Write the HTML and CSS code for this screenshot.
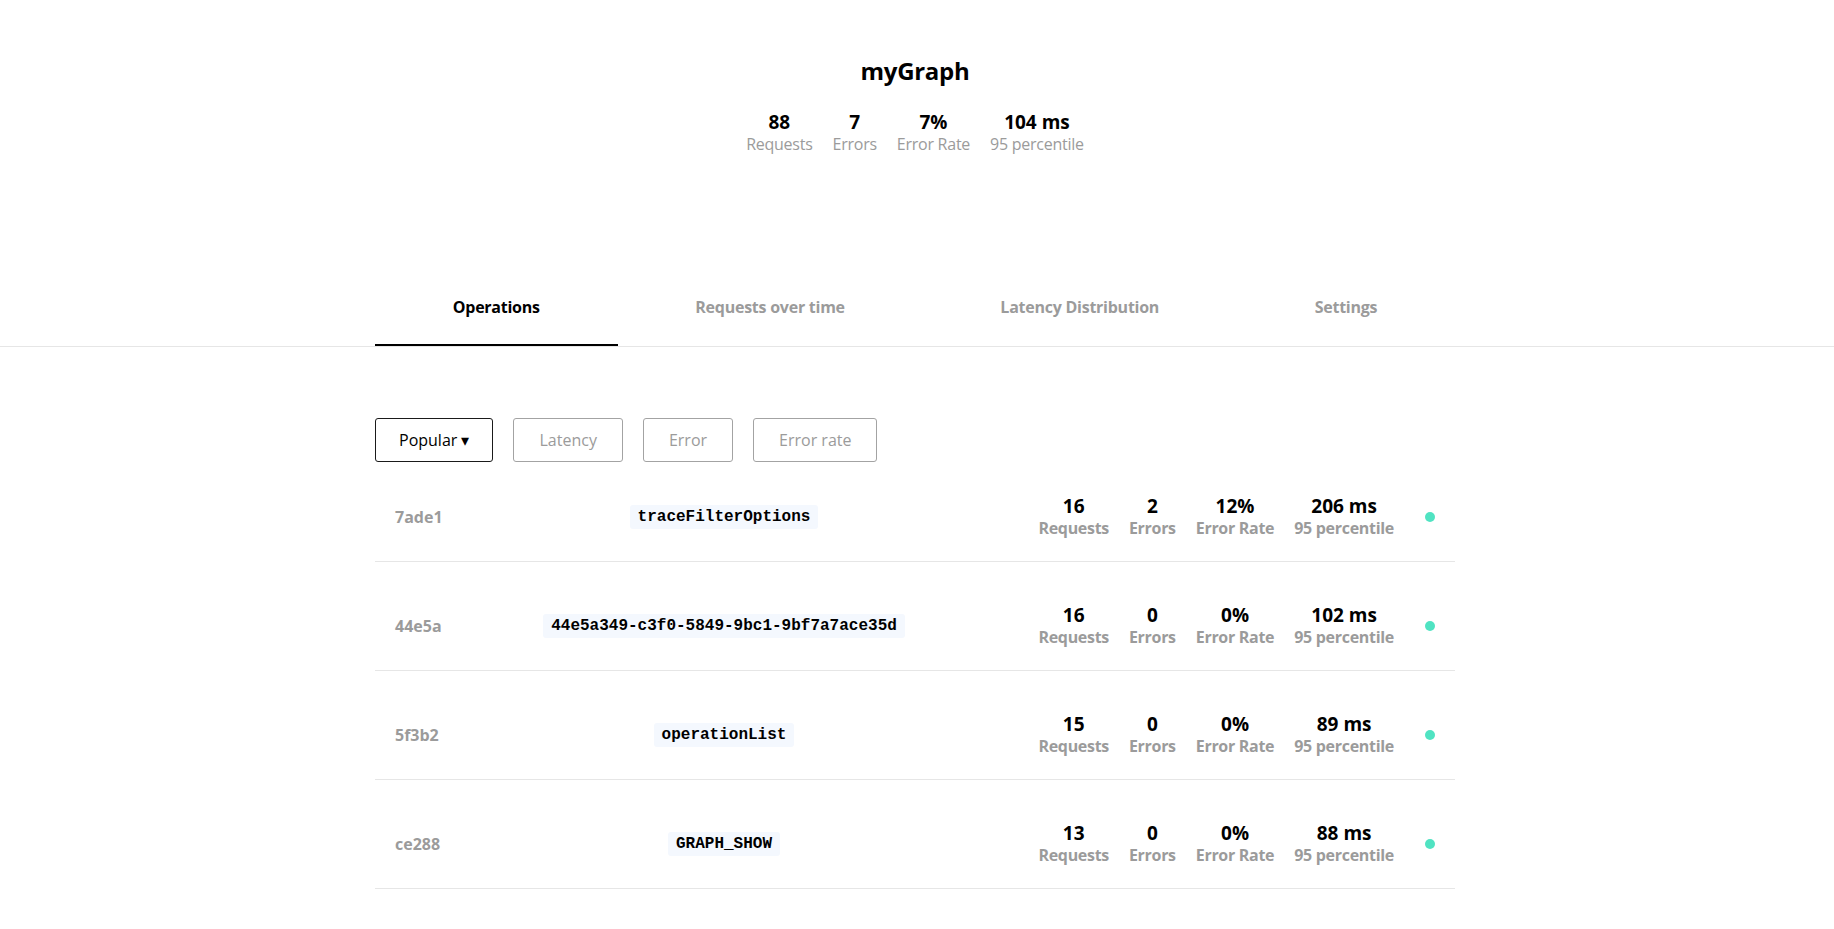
FILE: index.html
```html
<!DOCTYPE html>
<html lang="en">
<head>
<meta charset="utf-8">
<title>myGraph</title>
<link rel="stylesheet" href="styles.css">
</head>
<body>
  <header class="header">
    <h1 class="title">myGraph</h1>
    <div class="summary">
      <div class="stat"><div class="stat-value">88</div><div class="stat-label">Requests</div></div>
      <div class="stat"><div class="stat-value">7</div><div class="stat-label">Errors</div></div>
      <div class="stat"><div class="stat-value">7%</div><div class="stat-label">Error Rate</div></div>
      <div class="stat"><div class="stat-value">104 ms</div><div class="stat-label">95 percentile</div></div>
    </div>
  </header>

  <nav class="tabbar">
    <div class="wrap tabs">
      <div class="tab tab-active">Operations</div>
      <div class="tab">Requests over time</div>
      <div class="tab">Latency Distribution</div>
      <div class="tab">Settings</div>
    </div>
  </nav>

  <main class="wrap content">
    <div class="filters">
      <button class="filter filter-active">Popular ▾</button>
      <button class="filter">Latency</button>
      <button class="filter">Error</button>
      <button class="filter">Error rate</button>
    </div>

    <div class="ops">
      <div class="op-row">
        <div class="op-id">7ade1</div>
        <div class="op-name"><code class="op-code">traceFilterOptions</code></div>
        <div class="op-stats">
          <div class="stat"><div class="stat-value">16</div><div class="stat-label">Requests</div></div>
          <div class="stat"><div class="stat-value">2</div><div class="stat-label">Errors</div></div>
          <div class="stat"><div class="stat-value">12%</div><div class="stat-label">Error Rate</div></div>
          <div class="stat"><div class="stat-value">206 ms</div><div class="stat-label">95 percentile</div></div>
          <span class="dot"></span>
        </div>
      </div>
      <div class="op-row">
        <div class="op-id">44e5a</div>
        <div class="op-name"><code class="op-code">44e5a349-c3f0-5849-9bc1-9bf7a7ace35d</code></div>
        <div class="op-stats">
          <div class="stat"><div class="stat-value">16</div><div class="stat-label">Requests</div></div>
          <div class="stat"><div class="stat-value">0</div><div class="stat-label">Errors</div></div>
          <div class="stat"><div class="stat-value">0%</div><div class="stat-label">Error Rate</div></div>
          <div class="stat"><div class="stat-value">102 ms</div><div class="stat-label">95 percentile</div></div>
          <span class="dot"></span>
        </div>
      </div>
      <div class="op-row">
        <div class="op-id">5f3b2</div>
        <div class="op-name"><code class="op-code">operationList</code></div>
        <div class="op-stats">
          <div class="stat"><div class="stat-value">15</div><div class="stat-label">Requests</div></div>
          <div class="stat"><div class="stat-value">0</div><div class="stat-label">Errors</div></div>
          <div class="stat"><div class="stat-value">0%</div><div class="stat-label">Error Rate</div></div>
          <div class="stat"><div class="stat-value">89 ms</div><div class="stat-label">95 percentile</div></div>
          <span class="dot"></span>
        </div>
      </div>
      <div class="op-row">
        <div class="op-id">ce288</div>
        <div class="op-name"><code class="op-code">GRAPH_SHOW</code></div>
        <div class="op-stats">
          <div class="stat"><div class="stat-value">13</div><div class="stat-label">Requests</div></div>
          <div class="stat"><div class="stat-value">0</div><div class="stat-label">Errors</div></div>
          <div class="stat"><div class="stat-value">0%</div><div class="stat-label">Error Rate</div></div>
          <div class="stat"><div class="stat-value">88 ms</div><div class="stat-label">95 percentile</div></div>
          <span class="dot"></span>
        </div>
      </div>
    </div>
  </main>
</body>
</html>
```

FILE: styles.css
```css
* {
  box-sizing: border-box;
}

html, body {
  margin: 0;
  padding: 0;
  background: #ffffff;
}

body {
  font-family: "Open Sans", "Noto Sans", sans-serif;
  color: #000000;
  font-size: 16px;
}

.wrap {
  width: 1080px;
  margin-left: calc(50% - 542px);
}

/* ---------- header ---------- */
.header {
  padding-top: 56px;
  display: flex;
  flex-direction: column;
  align-items: center;
  padding-right: 4px;
}

.title {
  margin: 0;
  font-size: 24px;
  line-height: 30px;
  font-weight: 700;
  letter-spacing: -0.3px;
}

.summary {
  margin-top: 24px;
  display: flex;
  gap: 20px;
  justify-content: center;
}

.stat {
  display: flex;
  flex-direction: column;
  align-items: center;
  white-space: nowrap;
}

.stat-value {
  font-size: 19px;
  line-height: 24px;
  font-weight: 700;
  color: #000000;
}

.stat-label {
  font-size: 16px;
  line-height: 21px;
  color: #9b9b9b;
  letter-spacing: -0.25px;
}

/* ---------- tabs ---------- */
.tabbar {
  margin-top: 121px;
  border-bottom: 1px solid #e6e6e6;
}

.tabs {
  display: flex;
}

.tab {
  flex: 1 1 auto;
  text-align: center;
  padding: 21px 0 26px;
  font-size: 16px;
  line-height: 21px;
  font-weight: 700;
  letter-spacing: -0.25px;
  color: #9b9b9b;
  border-bottom: 2px solid transparent;
  white-space: nowrap;
}

.tab-active {
  color: #000000;
  border-bottom-color: #000000;
}

/* ---------- filters ---------- */
.filters {
  margin-top: 71px;
  display: flex;
  gap: 20px;
}

.filter {
  font-family: inherit;
  font-size: 16px;
  line-height: 20px;
  padding: 11px 25px;
  background: #ffffff;
  border: 1px solid #a3a3a3;
  border-radius: 3px;
  color: #9b9b9b;
  cursor: pointer;
}

.filter-active {
  border-color: #1a1a1a;
  color: #000000;
  padding: 11px 23px;
}

/* ---------- operations ---------- */
.op-row {
  display: grid;
  grid-template-columns: 60px 538px 1fr;
  align-items: center;
  padding: 41px 20px 22px;
  border-bottom: 1px solid #e6e6e6;
}

.op-row:first-child {
  padding-top: 32px;
}

.op-id {
  font-size: 16px;
  font-weight: 700;
  color: #9b9b9b;
}

.op-name {
  text-align: center;
}

.op-code {
  display: inline-block;
  font-family: "Liberation Mono", "Courier New", monospace;
  font-weight: 700;
  font-size: 16px;
  line-height: 18px;
  padding: 3px 8px;
  background: #f4f8fe;
  border-radius: 3px;
  color: #000000;
}

.op-stats {
  justify-self: end;
  display: flex;
  align-items: center;
  gap: 20px;
}

.op-stats .stat-label {
  font-weight: 700;
  letter-spacing: -0.3px;
}

.dot {
  width: 10px;
  height: 10px;
  border-radius: 50%;
  background: #50e3c2;
  margin-left: 11px;
}
```
